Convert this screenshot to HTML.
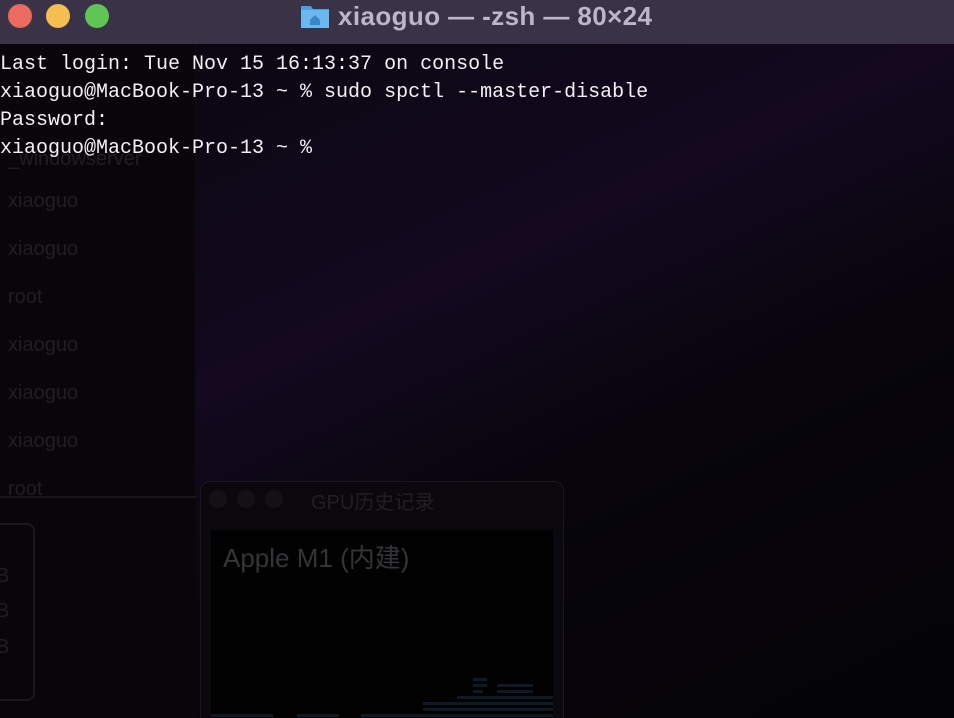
<!DOCTYPE html>
<html><head><meta charset="utf-8"><style>
*{margin:0;padding:0;box-sizing:border-box}
html,body{width:954px;height:718px;overflow:hidden}
body{position:relative;font-family:"Liberation Sans","Noto Sans CJK SC",sans-serif;
background:linear-gradient(155deg,#07050b 0%,#10081a 30%,#14091f 42%,#08050d 62%,#040307 100%);}
.bar{position:absolute;left:0;top:0;width:954px;height:44px;background:#3a3347;}
.dot{position:absolute;top:4px;width:24px;height:24px;border-radius:50%}
.title{position:absolute;left:338px;top:0;height:32px;line-height:32px;font-size:26px;letter-spacing:0.4px;font-weight:bold;color:#bdb5c8}
.left{position:absolute;left:0;top:44px;width:196px;height:452px;background:#08060a;border-right:1px solid #100d12}
.left2{position:absolute;left:0;top:496px;width:196px;height:222px;background:#08060a;border-top:2px solid #18161a}
.lt{position:absolute;left:8px;font-size:20px;color:#201e22}
.term{position:absolute;left:0;top:51px;font-family:"Liberation Mono",monospace;font-size:20px;line-height:28px;color:#f2f0f4;white-space:pre}
.gpu{position:absolute;left:200px;top:481px;width:364px;height:250px;background:#0a080c;border:1px solid #1b191d;border-radius:10px;overflow:hidden}
.gd{position:absolute;top:8px;width:18px;height:18px;border-radius:50%;background:#131115}
.inner{position:absolute;left:10px;top:48px;width:342px;height:200px;background:#010101}
</style></head><body>
<div class="bar">
<div class="dot" style="left:8px;background:#ec6a5e"></div>
<div class="dot" style="left:46px;background:#f4bf4f"></div>
<div class="dot" style="left:85px;background:#61c554"></div>
<svg style="position:absolute;left:300px;top:3px" width="30" height="26" viewBox="0 0 30 26"><path d="M1 3h10l2 3h16v19H1z" fill="#4a9fe0"/><rect x="1" y="7" width="28" height="18" fill="#6bb8f0"/><path d="M10 17l5-5 5 5v5h-10z" fill="#3a86c8"/></svg>
<div class="title">xiaoguo — -zsh — 80×24</div>
</div>
<div class="left">
<div class="lt" style="top:104px">_windowserver</div>
<div class="lt" style="top:146px">xiaoguo</div>
<div class="lt" style="top:194px">xiaoguo</div>
<div class="lt" style="top:242px">root</div>
<div class="lt" style="top:290px">xiaoguo</div>
<div class="lt" style="top:338px">xiaoguo</div>
<div class="lt" style="top:386px">xiaoguo</div>
<div class="lt" style="top:434px">root</div>
</div>
<div class="left2">
<div style="position:absolute;left:-12px;top:25px;width:47px;height:178px;border:2px solid #1a181c;border-radius:8px"></div>
<div class="lt" style="left:-4px;top:67px">B</div>
<div class="lt" style="left:-4px;top:102px">B</div>
<div class="lt" style="left:-4px;top:138px">B</div>
</div>
<div class="term">Last login: Tue Nov 15 16:13:37 on console
xiaoguo@MacBook-Pro-13 ~ % sudo spctl --master-disable
Password:
xiaoguo@MacBook-Pro-13 ~ % </div>
<div class="gpu">
<div class="gd" style="left:8px"></div><div class="gd" style="left:36px"></div><div class="gd" style="left:64px"></div>
<div style="position:absolute;left:110px;top:4px;font-size:20px;color:#211f23">GPU历史记录</div>
<div class="inner">
<div style="position:absolute;left:12px;top:8px;font-size:26px;color:#363438">Apple M1 (内建)</div>
<svg style="position:absolute;left:0;top:128px" width="342" height="60">
<g fill="#0e1923">
<rect x="0" y="56" width="62" height="3"/><rect x="86" y="56" width="42" height="3"/><rect x="150" y="56" width="192" height="3"/>
<rect x="212" y="50" width="130" height="3"/><rect x="212" y="44" width="130" height="3"/>
<rect x="246" y="38" width="96" height="3"/><rect x="262" y="32" width="10" height="3"/><rect x="286" y="32" width="36" height="3"/>
<rect x="262" y="26" width="14" height="3"/><rect x="286" y="26" width="36" height="3"/><rect x="262" y="20" width="14" height="3"/>
</g></svg>
</div>
</div>
</body></html>
